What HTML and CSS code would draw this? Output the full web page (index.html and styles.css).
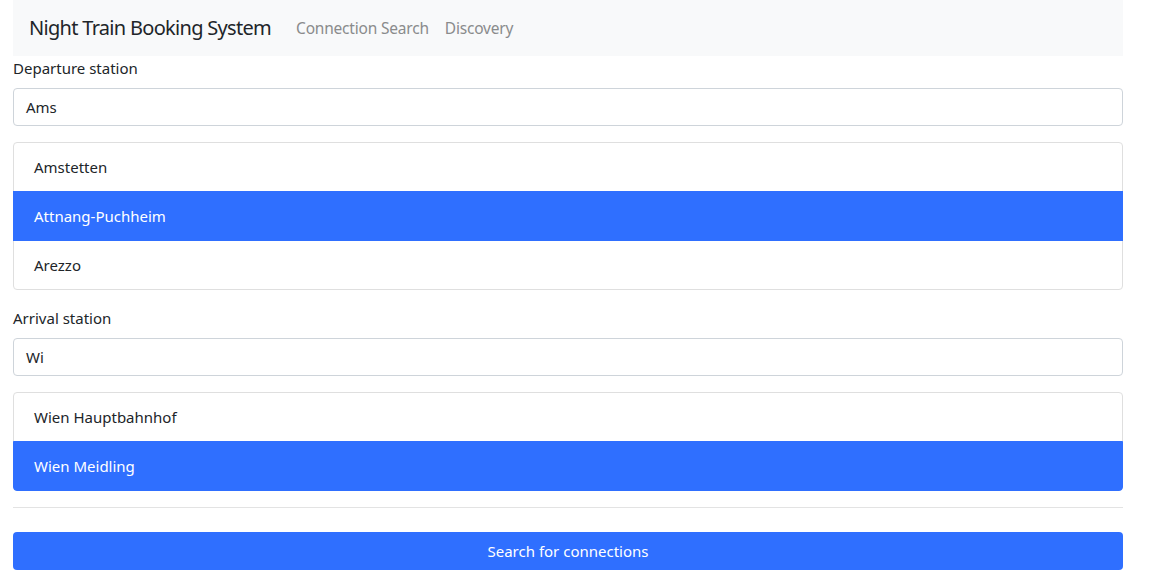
FILE: index.html
```html
<!DOCTYPE html>
<html lang="en">
<head>
<meta charset="utf-8">
<title>Night Train Booking System</title>
<link rel="stylesheet" href="styles.css">
</head>
<body>
<div class="container">
  <nav class="navbar">
    <span class="brand">Night Train Booking System</span>
    <a class="nav-link">Connection Search</a>
    <a class="nav-link">Discovery</a>
  </nav>
  <form class="form">
    <div class="group">
      <label class="label">Departure station</label>
      <div class="input">Ams</div>
      <ul class="list">
        <li class="item">Amstetten</li>
        <li class="item active">Attnang-Puchheim</li>
        <li class="item">Arezzo</li>
      </ul>
    </div>
    <div class="group">
      <label class="label">Arrival station</label>
      <div class="input">Wi</div>
      <ul class="list">
        <li class="item">Wien Hauptbahnhof</li>
        <li class="item active">Wien Meidling</li>
      </ul>
    </div>
    <hr class="rule">
    <button type="button" class="btn">Search for connections</button>
  </form>
</div>
</body>
</html>
```
FILE: styles.css
```css
* { box-sizing: border-box; }
body {
  margin: 0;
  font-family: "Noto Sans", "Open Sans", sans-serif;
  font-size: 16px;
  line-height: 24px;
  color: #212529;
  background: #fff;
}
.container {
  width: 1110px;
  margin-left: 13px;
}
.navbar {
  height: 56px;
  background: #f8f9fa;
  display: flex;
  align-items: center;
  padding: 0 16px;
}
.brand {
  font-size: 20px;
  line-height: 30px;
  color: #212529;
  margin-right: 17px;
  letter-spacing: -0.7px;
}
.nav-link {
  color: #8a8b8c;
  font-size: 15.5px;
  padding: 0 8px;
  letter-spacing: -0.2px;
}
.form { display: block; }
.group { margin-bottom: 16px; }
.label {
  display: block;
  margin-bottom: 8px;
  font-size: 15px;
}
.input {
  height: 38px;
  border: 1px solid #ced4da;
  border-radius: 4px;
  padding: 6px 12px;
  font-size: 15px;
  line-height: 24px;
  color: #212529;
}
.list {
  list-style: none;
  margin: 16px 0 0;
  padding: 0;
  display: flex;
  flex-direction: column;
}
.item {
  height: 50px;
  padding: 12px 20px;
  font-size: 15px;
  border: 1px solid #dfdfdf;
  margin-top: -1px;
  position: relative;
}
.item:first-child {
  margin-top: 0;
  border-radius: 4px 4px 0 0;
}
.item:last-child {
  border-radius: 0 0 4px 4px;
}
.item.active {
  background: #2f6fff;
  color: #fff;
  border-color: #2f6fff;
  z-index: 1;
}
.rule {
  border: 0;
  border-top: 1px solid #e3e3e3;
  margin: 0 0 24px;
}
.btn {
  display: block;
  width: 100%;
  height: 38px;
  border: 0;
  border-radius: 4px;
  background: #2f6fff;
  color: #fff;
  font-family: "Noto Sans", sans-serif;
  font-size: 15px;
  letter-spacing: 0;
}
```
